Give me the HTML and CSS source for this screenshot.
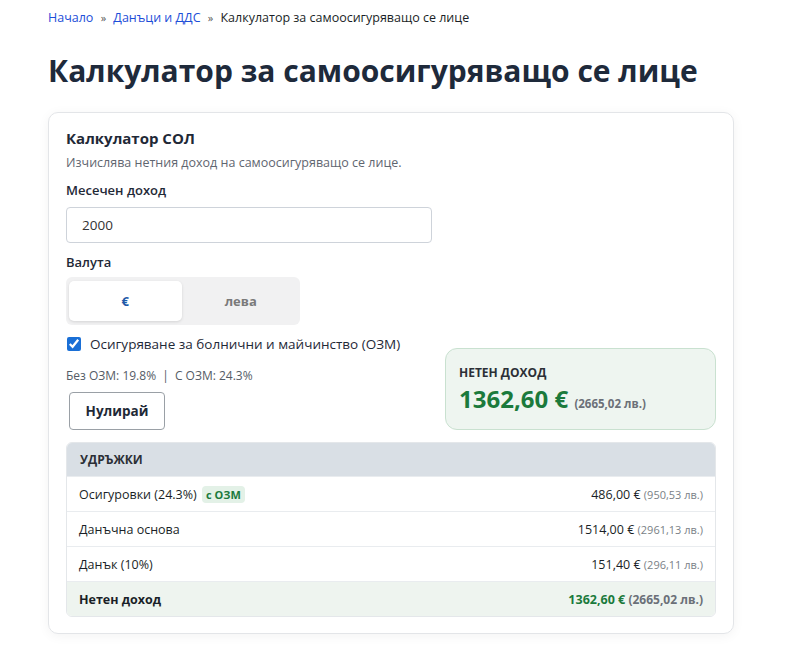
FILE: index.html
```html
<!DOCTYPE html>
<html lang="bg">
<head>
    <meta charset="UTF-8">
    <meta name="viewport" content="width=device-width, initial-scale=1.0">
    <title>Калкулатор за самоосигуряващо се лице</title>
    <link rel="stylesheet" href="styles.css">
</head>
<body>
    <div class="page">
        <nav class="breadcrumb">
            <a href="#">Начало</a>
            <span class="sep">»</span>
            <a href="#">Данъци и ДДС</a>
            <span class="sep">»</span>
            <span class="current">Калкулатор за самоосигуряващо се лице</span>
        </nav>

        <h1>Калкулатор за самоосигуряващо се лице</h1>

        <div class="card">
            <h2>Калкулатор СОЛ</h2>
            <p class="subtitle">Изчислява нетния доход на самоосигуряващо се лице.</p>

            <div class="layout">
                <div class="form">
                    <label class="field-label" for="income">Месечен доход</label>
                    <input type="text" id="income" class="input" value="2000">

                    <div class="field-label">Валута</div>
                    <div class="toggle">
                        <button class="toggle-btn active">€</button>
                        <button class="toggle-btn">лева</button>
                    </div>

                    <label class="check">
                        <input type="checkbox" checked>
                        <span>Осигуряване за болнични и майчинство (ОЗМ)</span>
                    </label>
                    <div class="rates">Без ОЗМ: 19.8% <span class="bar">|</span> С ОЗМ: 24.3%</div>
                    <button class="reset">Нулирай</button>
                </div>

                <div class="result">
                    <div class="result-label">Нетен доход</div>
                    <div class="result-value">1362,60 € <span class="result-alt">(2665,02 лв.)</span></div>
                </div>
            </div>

            <div class="table">
                <div class="table-head">Удръжки</div>
                <div class="row">
                    <span>Осигуровки (24.3%) <span class="badge">с ОЗМ</span></span>
                    <span>486,00 € <span class="alt">(950,53 лв.)</span></span>
                </div>
                <div class="row">
                    <span>Данъчна основа</span>
                    <span>1514,00 € <span class="alt">(2961,13 лв.)</span></span>
                </div>
                <div class="row">
                    <span>Данък (10%)</span>
                    <span>151,40 € <span class="alt">(296,11 лв.)</span></span>
                </div>
                <div class="row total">
                    <span>Нетен доход</span>
                    <span><span class="green">1362,60 €</span> <span class="alt">(2665,02 лв.)</span></span>
                </div>
            </div>
        </div>
    </div>
</body>
</html>
```

FILE: styles.css
```css
body {
    margin: 0;
    background: #ffffff;
    color: #1f2937;
    font-family: "Open Sans", "Noto Sans", sans-serif;
}
.page {
    max-width: 686px;
    padding: 0 48px 28px;
}
.breadcrumb {
    padding-top: 9px;
    font-size: 12.5px;
    color: #1f2937;
}
.breadcrumb a {
    color: #1d4ed8;
    text-decoration: none;
}
.breadcrumb .sep {
    color: #555;
    margin: 0 4px;
    font-size: 11px;
}
.breadcrumb .current {
    color: #1a1f27;
}
h1 {
    margin: 25px 0 22px;
    font-size: 30px;
    font-weight: 700;
    color: #1e2a3b;
    line-height: 1.3;
}
.card {
    border: 1px solid #e3e5e8;
    border-radius: 10px;
    box-shadow: 0 2px 12px rgba(0, 0, 0, 0.05);
    padding: 15px 17px 16px;
}
h2 {
    margin: 0;
    font-size: 15px;
    font-weight: 700;
    color: #1f2937;
}
.subtitle {
    margin: 6px 0 0;
    font-size: 12.5px;
    color: #5f6670;
}
.layout {
    display: grid;
    grid-template-columns: 366px 1fr;
    gap: 13px;
    align-items: end;
}
.form {
    display: flex;
    flex-direction: column;
    align-items: flex-start;
}
.field-label {
    margin-top: 10px;
    font-size: 13px;
    font-weight: 600;
    color: #1f2937;
}
.input {
    box-sizing: border-box;
    width: 366px;
    height: 36px;
    margin: 8px 0 0;
    padding: 0 15px;
    border: 1px solid #ced3da;
    border-radius: 4px;
    font-family: inherit;
    font-size: 13.5px;
    color: #333;
}
.toggle {
    display: flex;
    width: 234px;
    height: 48px;
    box-sizing: border-box;
    margin-top: 6px;
    padding: 4px 3px;
    background: #f1f1f2;
    border-radius: 6px;
    gap: 3px;
}
.toggle-btn {
    flex: 1;
    border: none;
    background: transparent;
    border-radius: 5px;
    font-family: inherit;
    font-size: 13px;
    font-weight: 700;
    color: #7a7a7a;
}
.toggle-btn.active {
    background: #fff;
    color: #1e5aa8;
    box-shadow: 0 1px 3px rgba(0, 0, 0, 0.12);
}
.check {
    display: flex;
    align-items: center;
    gap: 9px;
    margin-top: 10px;
    font-size: 13.5px;
    color: #1f2937;
}
.check input {
    margin: 0 0 0 1px;
    width: 14px;
    height: 14px;
    accent-color: #1a6fd6;
}
.rates {
    margin-top: 14px;
    font-size: 12px;
    color: #555c66;
}
.rates .bar {
    margin: 0 3px;
}
.reset {
    margin: 8px 0 0 3px;
    width: 96px;
    height: 38px;
    border: 1px solid #9aa0a6;
    border-radius: 4px;
    background: #fff;
    font-family: inherit;
    font-size: 13.5px;
    font-weight: 700;
    color: #1f2937;
}
.result {
    box-sizing: border-box;
    height: 82px;
    padding: 15px 13px 0;
    background: #eef5f0;
    border: 1px solid #c9e1d0;
    border-radius: 12px;
}
.result-label {
    font-size: 12px;
    font-weight: 700;
    text-transform: uppercase;
    color: #2b2f36;
}
.result-value {
    margin-top: 1px;
    font-size: 24px;
    font-weight: 700;
    color: #1b7a3c;
}
.result-alt {
    font-size: 11.5px;
    color: #6b7078;
}
.table {
    margin-top: 12px;
    border: 1px solid #e4e7ea;
    border-radius: 6px;
    overflow: hidden;
}
.table-head {
    height: 33px;
    line-height: 33px;
    padding: 0 13px;
    background: #d9dfe5;
    font-size: 12px;
    font-weight: 700;
    text-transform: uppercase;
    color: #2b2f36;
}
.row {
    display: flex;
    justify-content: space-between;
    align-items: center;
    height: 34px;
    padding: 0 12px;
    border-top: 1px solid #e9ecef;
    font-size: 12.5px;
    color: #1a1f27;
}
.row .alt {
    font-size: 11px;
    color: #7a7f86;
}
.badge {
    display: inline-block;
    margin-left: 2px;
    padding: 1px 4px;
    background: #e3f1e7;
    border-radius: 4px;
    font-size: 11px;
    font-weight: 700;
    color: #1b7a3c;
}
.row.total {
    background: #eef4ef;
    font-weight: 700;
}
.row.total .alt {
    font-size: 12px;
    color: #6b7078;
}
.green {
    color: #1b7a3c;
}
```
